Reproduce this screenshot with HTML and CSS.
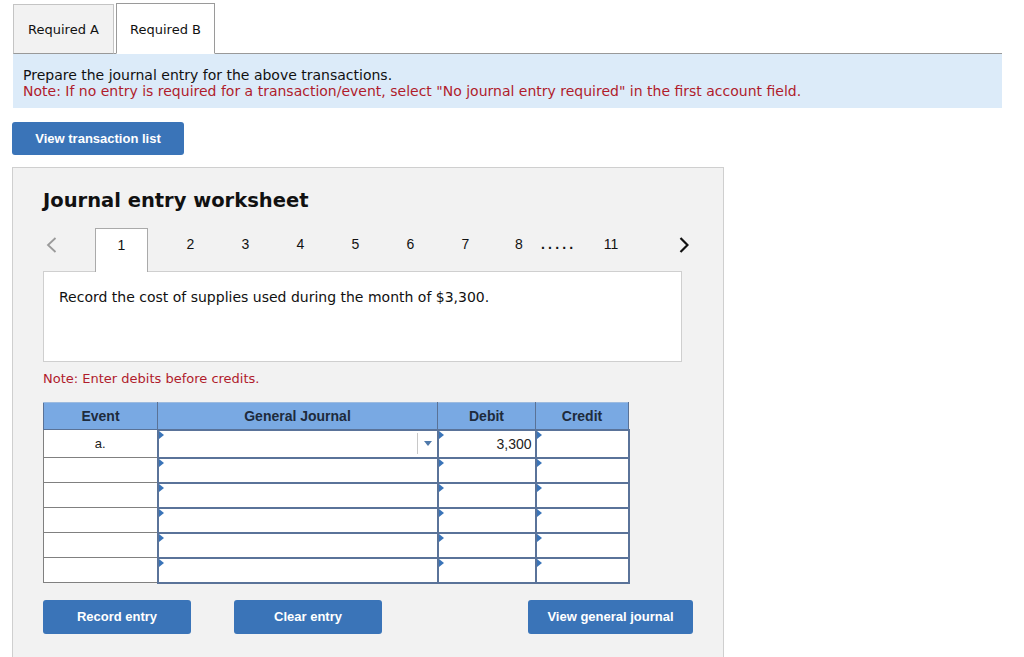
FILE: index.html
```html
<!DOCTYPE html>
<html>
<head>
<meta charset="utf-8">
<link rel="stylesheet" href="styles.css">
</head>
<body>
<div class="tabs">
  <div class="tab tab-a">Required A</div>
  <div class="tab tab-b">Required B</div>
</div>
<div class="info">
  <div>Prepare the journal entry for the above transactions.</div>
  <div class="red">Note: If no entry is required for a transaction/event, select "No journal entry required" in the first account field.</div>
</div>
<button class="btn btn-list">View transaction list</button>
<div class="panel">
  <h1 class="title">Journal entry worksheet</h1>
  <div class="nav">
    <div class="nav-item prev"><svg width="11" height="16" viewBox="0 0 11 16"><polyline points="9.5,1 2,8 9.5,15" fill="none" stroke="#9a9a9a" stroke-width="1.8"/></svg></div>
    <div class="nav-tab">1</div>
    <div class="nav-item w55 first">2</div>
    <div class="nav-item w55">3</div>
    <div class="nav-item w55">4</div>
    <div class="nav-item w55">5</div>
    <div class="nav-item w55">6</div>
    <div class="nav-item w55">7</div>
    <div class="nav-item w52">8</div>
    <div class="nav-item dots">.....</div>
    <div class="nav-item w70">11</div>
    <div class="nav-item next"><svg width="10" height="16" viewBox="0 0 10 16"><polyline points="1.5,1 8.5,8 1.5,15" fill="none" stroke="#111" stroke-width="2.2"/></svg></div>
  </div>
  <div class="desc">Record the cost of supplies used during the month of $3,300.</div>
  <div class="note">Note: Enter debits before credits.</div>
  <table class="journal">
    <thead>
      <tr><th class="c-ev">Event</th><th class="c-gj">General Journal</th><th class="c-dr">Debit</th><th class="c-cr">Credit</th></tr>
    </thead>
    <tbody>
      <tr class="first-row">
        <td class="ev">a.</td>
        <td class="inp"><span class="flag"></span><span class="sel-sep"></span><span class="sel-arrow"></span></td>
        <td class="inp num"><span class="flag"></span>3,300</td>
        <td class="inp"><span class="flag"></span></td>
      </tr>
      <tr><td class="ev"></td><td class="inp"><span class="flag"></span></td><td class="inp"><span class="flag"></span></td><td class="inp"><span class="flag"></span></td></tr>
      <tr><td class="ev"></td><td class="inp"><span class="flag"></span></td><td class="inp"><span class="flag"></span></td><td class="inp"><span class="flag"></span></td></tr>
      <tr><td class="ev"></td><td class="inp"><span class="flag"></span></td><td class="inp"><span class="flag"></span></td><td class="inp"><span class="flag"></span></td></tr>
      <tr><td class="ev"></td><td class="inp"><span class="flag"></span></td><td class="inp"><span class="flag"></span></td><td class="inp"><span class="flag"></span></td></tr>
      <tr><td class="ev"></td><td class="inp"><span class="flag"></span></td><td class="inp"><span class="flag"></span></td><td class="inp"><span class="flag"></span></td></tr>
    </tbody>
  </table>
  <div class="actions">
    <button class="btn btn-record">Record entry</button>
    <button class="btn btn-clear">Clear entry</button>
    <button class="btn btn-view">View general journal</button>
  </div>
</div>
</body>
</html>
```
FILE: styles.css
```css
* { box-sizing: border-box; }
html, body { margin: 0; padding: 0; background: #fff; }
body { font-family: "DejaVu Sans", Verdana, sans-serif; color: #111; }

.tabs {
  display: flex;
  align-items: flex-end;
  margin-left: 13px;
  width: 989px;
  padding-top: 3px;
  border-bottom: 1px solid #999;
  height: 54px;
}
.tab {
  font-size: 13px;
  display: flex;
  align-items: center;
  justify-content: center;
  margin-bottom: -1px;
  padding-top: 1px;
}
.tab-a {
  width: 101px;
  height: 50px;
  background: #f2f2f2;
  border: 1px solid #c4c4c4;
  border-bottom: 1px solid #999;
}
.tab-b {
  width: 99px;
  height: 51px;
  margin-left: 2px;
  background: #fff;
  border: 1px solid #9a9a9a;
  border-bottom: 1px solid #fff;
}

.info {
  margin-left: 13px;
  width: 989px;
  background: #dcebf9;
  padding: 13px 10px 9px 10px;
  font-size: 14px;
  line-height: 16px;
}
.red { color: #b01c2c; }

.btn {
  font-family: "Liberation Sans", Arial, sans-serif;
  font-weight: bold;
  font-size: 13px;
  color: #fff;
  background: #3a74b8;
  border: none;
  border-radius: 3px;
  padding: 0;
  display: block;
}
.btn-list {
  margin: 14px 0 0 12px;
  width: 172px;
  height: 33px;
}

.panel {
  margin: 12px 0 0 12px;
  width: 712px;
  background: #f2f2f2;
  border: 1px solid #cfcfcf;
  padding: 0 0 40px 30px;
}
.title {
  margin: 20px 0 0 0;
  font-size: 19.5px;
  line-height: 26px;
  font-weight: bold;
}

.nav {
  display: flex;
  align-items: flex-start;
  height: 43px;
  margin-top: 14px;
  font-family: "Liberation Sans", Arial, sans-serif;
  font-size: 14px;
}
.nav-item {
  height: 43px;
  padding-top: 8px;
  text-align: center;
  line-height: 16px;
}
.prev { width: 52px; text-align: left; padding-left: 3px; padding-top: 9px; }
.nav-tab {
  width: 53px;
  height: 44px;
  background: #fff;
  border: 1px solid #aaa;
  border-bottom: none;
  text-align: center;
  padding-top: 8px;
  line-height: 16px;
  position: relative;
  z-index: 1;
}
.w55 { width: 55px; }
.first { margin-left: 15px; }
.w52 { width: 52px; }
.w70 { width: 70px; }
.dots { width: 35px; margin-left: -4px; text-align: left; font-weight: bold; letter-spacing: 3.2px; }
.next { width: 76px; padding-top: 9px; }

.desc {
  width: 639px;
  height: 91px;
  background: #fff;
  border: 1px solid #cfcfcf;
  padding: 16px 15px;
  font-size: 14px;
  line-height: 18px;
}
.note {
  margin-top: 9px;
  color: #b01c2c;
  font-size: 13px;
  line-height: 16px;
}

.journal {
  margin-top: 15px;
  border-collapse: collapse;
  table-layout: fixed;
  width: 585px;
  font-family: "Liberation Sans", Arial, sans-serif;
  font-size: 14px;
}
.journal th {
  background: #79a9e3;
  color: #1e2b3c;
  font-weight: bold;
  height: 27px;
  border: 1px solid #5a7296;
  border-top: 1px solid #9cbbe0;
  padding: 0;
}
.c-ev { width: 114px; }
.c-gj { width: 280px; }
.c-dr { width: 98px; }
.c-cr { width: 93px; }
.journal td {
  height: 25px;
  background: #fff;
  padding: 0;
  position: relative;
}
.journal tr.first-row td { height: 28px; }
.journal td.ev {
  border: 1px solid #808080;
  text-align: center;
  color: #222;
  font-size: 13px;
}
.journal td.inp {
  border: 2px solid #5a7399;
}
.journal td.num {
  text-align: right;
  padding-right: 3px;
  color: #222;
}
.flag {
  position: absolute;
  left: 0;
  top: 0;
  width: 0;
  height: 0;
  border-top: 4px solid transparent;
  border-bottom: 4px solid transparent;
  border-left: 5px solid #3a74b8;
}
.sel-sep {
  position: absolute;
  right: 19px;
  top: 2px;
  bottom: 3px;
  width: 1px;
  background: #c8c8c8;
}
.sel-arrow {
  position: absolute;
  right: 5px;
  top: 10px;
  width: 0;
  height: 0;
  border-left: 4.5px solid transparent;
  border-right: 4.5px solid transparent;
  border-top: 5px solid #4f79aa;
}

.actions {
  display: flex;
  margin-top: 16px;
}
.actions .btn { height: 34px; font-size: 13px; }
.btn-record { width: 148px; }
.btn-clear { width: 148px; margin-left: 43px; }
.btn-view { width: 165px; margin-left: 146px; }
```
